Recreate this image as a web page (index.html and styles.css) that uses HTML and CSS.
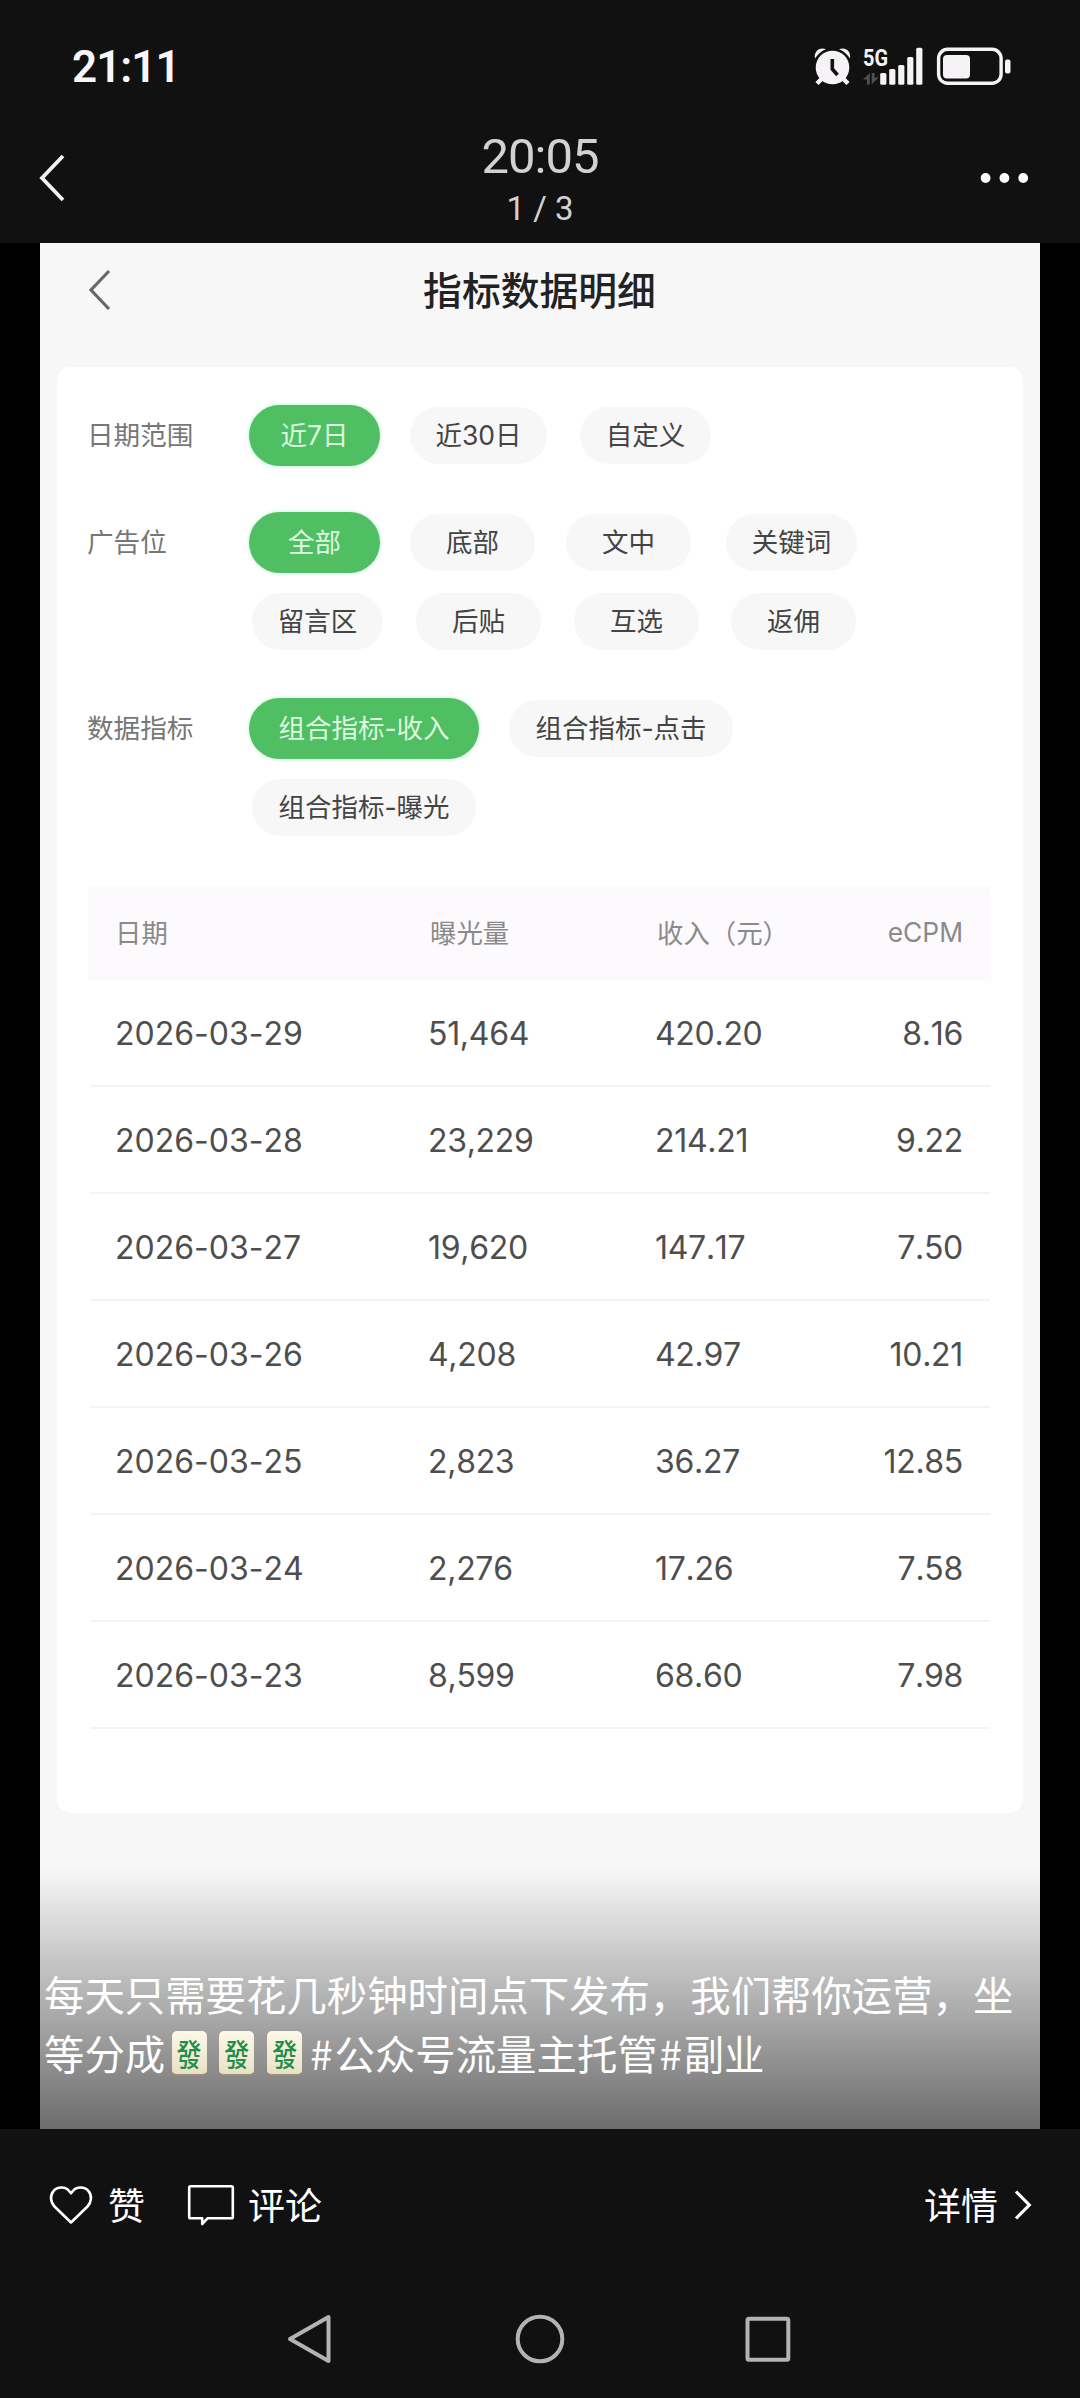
FILE: index.html
```html
<!DOCTYPE html>
<html lang="zh-CN">
<head>
<meta charset="utf-8">
<title>指标数据明细</title>
<link rel="stylesheet" href="styles.css">
</head>
<body>
<div class="screen">
  <header class="topbar">
    <div class="status">
      <span class="clock">21:11</span>
      <svg class="status-icons" width="198" height="40" viewBox="0 0 198 40">
        <g fill="#f5f3f5">
          <circle cx="18.500" cy="21.500" r="16.800"/>
          <path d="M1 12.500C-.5 5 6 .5 12 3.200C7 5 4 8 1 12.500ZM36 12.500C37.500 5 31 .5 25 3.200C30 5 33 8 36 12.500Z"/>
          <path d="M3 37.500L9 31.500M34 37.500L28 31.500" stroke="#f5f3f5" stroke-width="4.500"/>
        </g>
        <path d="M18.300 13V23L23.500 29" fill="none" stroke="#111" stroke-width="3.600"/>
        <text x="49" y="20" class="net" textLength="25" lengthAdjust="spacingAndGlyphs">5G</text>
        <path d="M49 33.500L55.800 27V38.500H53V33.500ZM64.500 31.500L57.700 38.500V27H60.500V31.500Z" fill="#505050"/>
        <g fill="#f5f3f5">
          <rect x="66.200" y="27" width="6.200" height="11.700" rx="1.500"/>
          <rect x="75.200" y="23" width="6.200" height="15.700" rx="1.500"/>
          <rect x="84.200" y="19" width="6.200" height="19.700" rx="1.500"/>
          <rect x="93.200" y="11" width="6.200" height="27.700" rx="1.500"/>
          <rect x="102.200" y="1.700" width="6.200" height="37" rx="1.500"/>
          <rect x="129" y="9" width="27" height="23.500" rx="4"/>
          <rect x="191" y="13.500" width="5.500" height="14" rx="2"/>
        </g>
        <rect x="124.600" y="3.300" width="62.500" height="34" rx="9" fill="none" stroke="#f5f3f5" stroke-width="3.400"/>
      </svg>
    </div>
    <div class="viewer-nav">
      <svg width="30" height="50" viewBox="0 0 30 50"><path d="M25 3L4 25L25 47" fill="none" stroke="#f2f2f2" stroke-width="3.800"/></svg>
      <div class="viewer-title"><span class="time">20:05</span><span class="count">1 / 3</span></div>
      <svg width="50" height="12" viewBox="0 0 50 12" fill="#fff"><circle cx="5.600" cy="6" r="4.900"/><circle cx="24.400" cy="6" r="4.900"/><circle cx="43.200" cy="6" r="4.900"/></svg>
    </div>
  </header>

  <main class="photo">
    <div class="page-head">
      <svg width="26" height="46" viewBox="0 0 26 46"><path d="M22 4L4 23L22 42" fill="none" stroke="#686868" stroke-width="3.200"/></svg>
      <h1>指标数据明细</h1>
    </div>

    <section class="card">
      <div class="filter f-date">
        <span class="label">日期范围</span>
        <div class="chips">
          <div class="row r1"><span class="chip on c3">近7日</span><span class="chip cw">近30日</span><span class="chip c3">自定义</span></div>
        </div>
      </div>
      <div class="filter f-slot">
        <span class="label">广告位</span>
        <div class="chips">
          <div class="row r2"><span class="chip on c3">全部</span><span class="chip c2">底部</span><span class="chip c2">文中</span><span class="chip c3">关键词</span></div>
          <div class="row r3"><span class="chip c3">留言区</span><span class="chip c2">后贴</span><span class="chip c2">互选</span><span class="chip c2">返佣</span></div>
        </div>
      </div>
      <div class="filter f-metric">
        <span class="label">数据指标</span>
        <div class="chips">
          <div class="row r4"><span class="chip on c7">组合指标-收入</span><span class="chip c6">组合指标-点击</span></div>
          <div class="row r5"><span class="chip c6">组合指标-曝光</span></div>
        </div>
      </div>

      <div class="table">
        <div class="tr th"><span>日期</span><span>曝光量</span><span>收入（元）</span><span>eCPM</span></div>
        <div class="tr"><span>2026-03-29</span><span>51,464</span><span>420.20</span><span>8.16</span></div>
        <div class="tr"><span>2026-03-28</span><span>23,229</span><span>214.21</span><span>9.22</span></div>
        <div class="tr"><span>2026-03-27</span><span>19,620</span><span>147.17</span><span>7.50</span></div>
        <div class="tr"><span>2026-03-26</span><span>4,208</span><span>42.97</span><span>10.21</span></div>
        <div class="tr"><span>2026-03-25</span><span>2,823</span><span>36.27</span><span>12.85</span></div>
        <div class="tr"><span>2026-03-24</span><span>2,276</span><span>17.26</span><span>7.58</span></div>
        <div class="tr"><span>2026-03-23</span><span>8,599</span><span>68.60</span><span>7.98</span></div>
      </div>
    </section>

    <div class="caption">
      <p>每天只需要花几秒钟时间点下发布，我们帮你运营，坐</p>
      <p>等分成<span class="tile"><b>發</b></span><span class="tile"><b>發</b></span><span class="tile"><b>發</b></span><span class="hash">#</span>公众号流量主托管<span class="hash">#</span>副业</p>
    </div>
  </main>

  <div class="actions">
    <svg class="heart" width="44" height="40" viewBox="0 0 44 40"><path d="M22 37.500L5.500 21.500C1.500 17.500.8 10.500 4.300 6.300C8.600 1.200 16.500 1.500 20.300 6.200L22 8.300L23.700 6.200C27.500 1.500 35.400 1.200 39.700 6.300C43.200 10.500 42.500 17.500 38.500 21.500Z" fill="none" stroke="#fff" stroke-width="2.600" stroke-linejoin="round"/></svg>
    <span class="like">赞</span>
    <svg class="bubble" width="48" height="42" viewBox="0 0 48 42"><path d="M3.500 2.300H44.500Q45.800 2.300 45.800 3.600V33Q45.800 34.300 44.500 34.300H20.500L15.200 40V34.300H3.500Q2.200 34.300 2.200 33V3.600Q2.200 2.300 3.500 2.300Z" fill="none" stroke="#fff" stroke-width="2.600" stroke-linejoin="round"/></svg>
    <span class="comment">评论</span>
    <span class="detail">详情</span>
    <svg width="20" height="32" viewBox="0 0 20 32"><path d="M3 2.500L16.300 16L3 29.500" fill="none" stroke="#fff" stroke-width="3.200"/></svg>
  </div>

  <nav class="sysnav">
    <svg width="50" height="56" viewBox="0 0 50 56"><path d="M42.500 6V50L4 28Z" fill="none" stroke="#b3b3b3" stroke-width="4" stroke-linejoin="round"/></svg>
    <svg width="56" height="56" viewBox="0 0 56 56"><circle cx="28" cy="28" r="22.300" fill="none" stroke="#b3b3b3" stroke-width="4"/></svg>
    <svg width="50" height="56" viewBox="0 0 50 56"><rect x="4.500" y="7.700" width="40.800" height="41" rx="1.500" fill="none" stroke="#b3b3b3" stroke-width="4"/></svg>
  </nav>
</div>
</body>
</html>
```
FILE: styles.css
```css
* { box-sizing: border-box; margin: 0; padding: 0; }
body { background: #000; font-family: Inter, "Noto Sans CJK SC", sans-serif; }
svg { display: block; flex: none; overflow: visible; }
span, h1, p { white-space: nowrap; }

.screen { width: 1080px; height: 2398px; display: flex; flex-direction: column; overflow: hidden; }

/* status bar and viewer header */
.topbar { height: 243px; background: #111; color: #fff; }
.status { height: 120px; padding: 46px 68px 0 72px; display: flex; justify-content: space-between; align-items: flex-start; }
.clock { font: 600 44px/42px Roboto, sans-serif; letter-spacing: -1px; color: #f8f6f8; }
.net { font: 700 24px Roboto, sans-serif; fill: #f5f3f5; }
.viewer-nav { height: 116px; padding: 0 50px 0 38px; display: grid; grid-template-columns: 62px 1fr 50px; align-items: center; }
.viewer-title { display: flex; flex-direction: column; align-items: center; color: #d2d2d2; font-family: Roboto, sans-serif; padding-top: 2px; }
.time { font-size: 49px; line-height: 56px; letter-spacing: -1px; }
.count { font-size: 33px; line-height: 40px; padding-top: 4px; }

/* displayed picture */
.photo { width: 1000px; height: 1886px; margin: 0 auto; background: #f7f7f7; display: flex; flex-direction: column; }
.page-head { height: 124px; display: grid; grid-template-columns: 100px 1fr 100px; padding: 24px 48px 0 47px; align-items: start; flex: none; }
h1 { font-size: 38.800px; line-height: 48px; font-weight: 500; text-align: center; color: #222; }
.card { width: 966px; height: 1446px; margin-left: 17px; padding: 38px 32px 0 31px; background: #fff; border-radius: 14px; flex: none; }

.filter { display: flex; }
.label { width: 162px; margin-left: -1px; font-size: 26.600px; line-height: 61px; color: #777; }
.chips { display: flex; flex-direction: column; gap: 18px; }
.row { display: grid; height: 61px; align-items: center; }
.r1 { grid-template-columns: 161px 170px auto; }
.r2 { grid-template-columns: 161px 156px 160px auto; }
.r3 { grid-template-columns: 164px 158px 157px auto; padding-left: 3px; }
.r4 { grid-template-columns: 260px auto; }
.r5 { padding-left: 3px; }
.f-slot { margin-top: 46px; }
.f-metric { margin-top: 46px; }
.chip { height: 57px; border-radius: 29px; background: #f7f7f7; color: #444; font-size: 26.500px; line-height: 57px; text-align: center; }
.on { height: 61px; line-height: 61px; border-radius: 31px; background: #50be63; color: #dcfbe0; box-shadow: 0 0 4px #b9f7cb; }
.c2 { width: 125px; }
.c3 { width: 131px; }
.cw { width: 137px; }
.c6 { width: 224px; }
.c7 { width: 230px; }

.table { margin-top: 48px; }
.tr { height: 107px; margin: 0 1px 0 3px; padding: 1px 27px 0 24px; display: grid; grid-template-columns: 313px 227px 1fr auto; align-items: center; border-bottom: 2px solid #f3f3f3; font-size: 32px; font-kerning: none; font-feature-settings: "calt" 0; color: #4e4e4e; }
.tr:not(.th) span:nth-child(n+2) { letter-spacing: -.3px; }
.th { height: 94px; margin: 0; padding: 0 28px 3px 27px; border: 0; background: #fdfafe; color: #8a8a8a; font-size: 26.400px; grid-template-columns: 315px 227px 1fr auto; }

.caption { flex: 1; margin-top: 55px; padding: 96px 0 0 4px; background: linear-gradient(rgba(0,0,0,0), rgba(0,0,0,.56)); color: #fff; font-size: 40.400px; line-height: 59px; font-family: "Noto Sans CJK SC", sans-serif; }
.caption p { height: 59px; display: flex; align-items: center; }
.hash { width: 26px; text-align: center; }
.tile { width: 35px; height: 45px; margin: 2px 6.400px 0; border-radius: 5px; background: linear-gradient(#fdf9e8, #e9e0c6); border-bottom: 2px solid #9c8f72; display: flex; align-items: center; justify-content: center; }
.tile b { font: 500 25px/36px "Noto Sans CJK TC", serif; color: #1f8f4c; transform: scaleY(1.22); }

/* bottom bars */
.actions { height: 151px; background: #111; color: #fff; display: flex; align-items: center; padding: 0 47px 0 49px; font-family: "Noto Sans CJK SC", sans-serif; font-size: 37px; line-height: 40px; }
.actions span { padding-bottom: 2px; }
.like { margin-left: 15px; width: 79px; }
.comment { margin-left: 13px; }
.detail { margin-left: auto; margin-right: 15px; }
.sysnav { flex: 1; background: #111; display: flex; padding: 31px 0 0 286px; }
.sysnav svg:nth-child(2) { margin-left: 176px; }
.sysnav svg:nth-child(3) { margin-left: 175px; }
```
